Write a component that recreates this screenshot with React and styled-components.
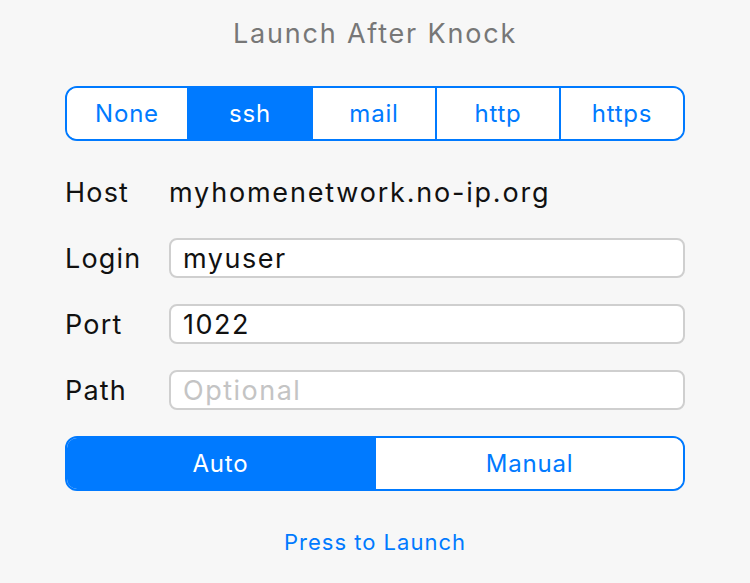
import React, { useState } from "react";
import styled, { createGlobalStyle } from "styled-components";

const Global = createGlobalStyle`
  body {
    margin: 0;
    background: #f7f7f7;
    font-family: Inter, "Noto Sans", sans-serif;
  }
`;

const BLUE = "#007aff";

const Page = styled.div`
  width: 750px;
  height: 583px;
  padding: 14px 65px 0 65px;
  box-sizing: border-box;
  display: flex;
  flex-direction: column;
`;

const Title = styled.h1`
  margin: 0;
  font-size: 27px;
  line-height: 40px;
  font-weight: 400;
  letter-spacing: 1.8px;
  color: #777;
  text-align: center;
`;

const Segmented = styled.div`
  display: flex;
  height: 55px;
  margin-top: ${(p) => p.$top}px;
  border: 2px solid ${BLUE};
  border-radius: 12px;
  overflow: hidden;
  box-sizing: border-box;
`;

const Segment = styled.button`
  flex: ${(p) => (p.$width ? `0 0 ${p.$width}px` : "1 1 0")};
  border: none;
  border-left: ${(p) => (p.$first ? "none" : `2px solid ${BLUE}`)};
  background: ${(p) => (p.$active ? BLUE : "#fff")};
  color: ${(p) => (p.$active ? "#fff" : BLUE)};
  font-family: inherit;
  font-size: 24px;
  letter-spacing: 0.8px;
  padding: 0;
  cursor: pointer;
`;

const Form = styled.div`
  display: flex;
  flex-direction: column;
  gap: 26px;
  margin-top: 31px;
`;

const Row = styled.div`
  display: flex;
  align-items: center;
  height: 40px;
`;

const Label = styled.span`
  width: 104px;
  font-size: 27px;
  letter-spacing: 1.2px;
  color: #111;
`;

const Value = styled.span`
  font-size: 27px;
  letter-spacing: 1.8px;
  color: #111;
`;

const Field = styled.input`
  flex: 1;
  height: 40px;
  box-sizing: border-box;
  border: 2px solid #cfcfcf;
  border-radius: 8px;
  background: #fff;
  padding: 0 12px;
  font-family: inherit;
  font-size: 27px;
  letter-spacing: 1.5px;
  color: #111;
  outline: none;
  &::placeholder {
    color: #c4c4c4;
  }
`;

const Launch = styled.button`
  align-self: center;
  margin-top: 37px;
  border: none;
  background: none;
  font-family: inherit;
  font-size: 22px;
  letter-spacing: 1px;
  color: ${BLUE};
  cursor: pointer;
`;

const services = ["None", "ssh", "mail", "http", "https"];

export default function App() {
  const [service, setService] = useState("ssh");
  const [mode, setMode] = useState("Auto");
  return (
    <>
      <Global />
      <Page>
        <Title>Launch After Knock</Title>
        <Segmented $top={32}>
          {services.map((s, i) => (
            <Segment
              key={s}
              $first={i === 0}
              $width={i === 0 ? 120 : 0}
              $active={service === s}
              onClick={() => setService(s)}
            >
              {s}
            </Segment>
          ))}
        </Segmented>
        <Form>
          <Row>
            <Label>Host</Label>
            <Value>myhomenetwork.no-ip.org</Value>
          </Row>
          <Row>
            <Label>Login</Label>
            <Field defaultValue="myuser" />
          </Row>
          <Row>
            <Label>Port</Label>
            <Field defaultValue="1022" />
          </Row>
          <Row>
            <Label>Path</Label>
            <Field placeholder="Optional" />
          </Row>
        </Form>
        <Segmented $top={26}>
          {["Auto", "Manual"].map((m, i) => (
            <Segment
              key={m}
              $first={i === 0}
              $width={i === 0 ? 307 : 0}
              $active={mode === m}
              onClick={() => setMode(m)}
            >
              {m}
            </Segment>
          ))}
        </Segmented>
        <Launch>Press to Launch</Launch>
      </Page>
    </>
  );
}
